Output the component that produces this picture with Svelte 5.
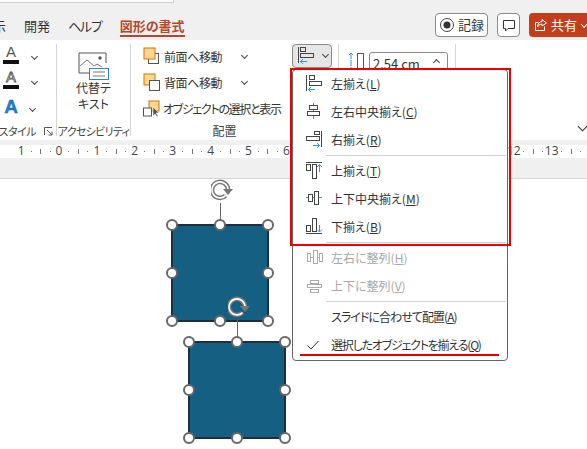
<script>
  const alignItems = [
    { label: '左揃え', key: 'L', icon: 'left' },
    { label: '左右中央揃え', key: 'C', icon: 'center' },
    { label: '右揃え', key: 'R', icon: 'right', sep: true },
    { label: '上揃え', key: 'T', icon: 'top' },
    { label: '上下中央揃え', key: 'M', icon: 'middle' },
    { label: '下揃え', key: 'B', icon: 'bottom', sep: true },
    { label: '左右に整列', key: 'H', icon: 'disth', off: true },
    { label: '上下に整列', key: 'V', icon: 'distv', off: true, sep: true },
    { label: 'スライドに合わせて配置', key: 'A', tight: true },
    { label: '選択したオブジェクトを揃える', key: 'Q', checked: true, tighter: true }
  ];

  const rulerZero = 59;
  const rulerStep = 37.9;
  const rulerNums = [];
  const rulerTicks = [];
  for (let i = -1; i <= 14; i++) {
    const x = rulerZero + i * rulerStep;
    if (i !== 14) rulerNums.push({ x, n: Math.abs(i) });
    rulerTicks.push({ x: x + rulerStep / 4, tall: false });
    rulerTicks.push({ x: x + rulerStep / 2, tall: true });
    rulerTicks.push({ x: x + (rulerStep * 3) / 4, tall: false });
  }

  const handles = [
    [0, 0], [48, 0], [96, 0],
    [0, 48], [96, 48],
    [0, 96], [48, 96], [96, 96]
  ];
  const shapes = [
    { x: 172, y: 225 },
    { x: 189, y: 342 }
  ];
</script>

<div class="app">
  <div class="tabbar">
    <div class="search-edge"></div>
    <div class="tabs">
      <span class="tab clipped">示</span>
      <span class="tab">開発</span>
      <span class="tab help">ヘルプ</span>
      <span class="tab active">図形の書式</span>
    </div>
    <div class="actions">
      <button class="btn record">
        <svg width="16" height="16" viewBox="0 0 16 16"><circle cx="8" cy="8" r="6.5" fill="none" stroke="#444" /><circle cx="8" cy="8" r="3.5" fill="#333" /></svg>
        記録
      </button>
      <button class="btn comment">
        <svg width="16" height="16" viewBox="0 0 16 16" fill="none" stroke="#333"><path d="M2.5 3.5h11v8H7l-2.5 2.5v-2.5h-2z" /></svg>
      </button>
      <button class="btn share">
        <svg width="16" height="16" viewBox="0 0 16 16" fill="none" stroke="#fff"><path d="M9 2.5l4.5 3.5L9 9V7.2C6.5 7.2 5.2 8.3 4.6 10 4.6 7 6 4.8 9 4.6zM11.5 9.5v4h-9v-8h3" /></svg>
        共有
        <span class="share-caret"></span>
      </button>
    </div>
  </div>

  <div class="ribbon">
    <div class="group styles">
      <div class="text-tools">
        <div class="tool-row">
          <span class="a-icon fill">A</span><span class="caret"></span>
        </div>
        <div class="tool-row">
          <span class="a-icon outline">A</span><span class="caret"></span>
        </div>
        <div class="tool-row blue-row">
          <span class="a-blue">A</span><span class="caret"></span>
        </div>
      </div>
      <div class="group-label left-cut">
        <span>ンスタイル</span>
        <svg width="9" height="9" viewBox="0 0 9 9" fill="none" stroke="#555"><path d="M.5 8V.5H8M3 3l5 5M8 4.5V8H4.5" /></svg>
      </div>
    </div>

    <div class="group alt">
      <div class="alt-body">
        <svg width="32" height="28" viewBox="0 0 32 28">
          <path d="M12 21H1V1h27v10" fill="none" stroke="#555" />
          <path d="M2 14l7-6 7 6 3-2 5 3" fill="none" stroke="#777" />
          <circle cx="22" cy="6" r="1.7" fill="#555" />
          <rect x="11.5" y="16.5" width="19" height="11" fill="#fff" stroke="#2b88c8" />
          <path d="M15 20h12M15 24h12" stroke="#777" />
        </svg>
        <span class="alt-text">代替テ<br />キスト</span>
      </div>
      <div class="group-label access">アクセシビリティ</div>
    </div>

    <div class="group arrange">
      <div class="arrange-body">
        <div class="arrange-cmds">
          <div class="cmd">
            <svg width="18" height="20" viewBox="0 0 18 20">
              <rect x="5.5" y="6.5" width="10" height="10" fill="#fff" stroke="#555" />
              <rect x="1" y="1" width="11" height="11" fill="#fad98e" stroke="#d9700f" />
            </svg>
            <span class="cmd-text">前面へ移動</span><span class="caret"></span>
          </div>
          <div class="cmd">
            <svg width="18" height="20" viewBox="0 0 18 20">
              <rect x="1" y="1" width="11" height="11" fill="#fad98e" stroke="#d9700f" />
              <rect x="6.5" y="7.5" width="10" height="10" fill="#fff" stroke="#555" />
            </svg>
            <span class="cmd-text">背面へ移動</span><span class="caret"></span>
          </div>
          <div class="cmd">
            <svg width="18" height="18" viewBox="0 0 18 18">
              <rect x="6" y="1" width="10" height="10" fill="#fad98e" stroke="#d9700f" />
              <rect x="0.5" y="8" width="8" height="8" fill="#fff" stroke="#555" />
              <path d="M10 7v9l2-2 2 3 1-1-2-3h3z" fill="#555" stroke="#fff" stroke-width=".5" />
            </svg>
            <span class="cmd-text last">オブジェクトの選択と表示</span>
          </div>
        </div>
        <div class="align-btn">
          <svg width="18" height="20" viewBox="0 0 18 20" fill="none">
            <path d="M1.5 1v16" stroke="#444" />
            <rect x="3.5" y="1.5" width="5" height="4" stroke="#444" />
            <rect x="3.5" y="7.5" width="13" height="4" stroke="#444" />
            <path d="M10 15.5H3.5M6 13l-2.5 2.5L6 18" stroke="#2b9ae0" />
          </svg>
          <span class="caret"></span>
        </div>
      </div>
      <div class="group-label arrange-label">配置</div>
    </div>

    <div class="group size">
      <div class="size-row">
        <svg width="18" height="20" viewBox="0 0 18 20" fill="none">
          <path d="M4 1v18" stroke="#2b9ae0" stroke-dasharray="6 1" />
          <path d="M2 3l2-2 2 2" stroke="#2b9ae0" />
          <rect x="10.5" y="1.5" width="6" height="17" stroke="#555" />
        </svg>
        <div class="size-input">2.54 cm<span class="spin"></span></div>
      </div>
    </div>
    <span class="collapse"></span>
  </div>

  <div class="ruler-band">
    <div class="ruler">
      {#each rulerTicks as t}
        <i class="tick" class:tall={t.tall} style="left:{t.x}px"></i>
      {/each}
      {#each rulerNums as r}
        <span class="num" style="left:{r.x}px">{r.n}</span>
      {/each}
    </div>
  </div>

  <div class="canvas">
    {#each shapes as s}
      <div class="shape" style="left:{s.x - 1}px;top:{s.y - 180}px">
        <span class="stem"></span>
        <svg class="rotate" width="26" height="24" viewBox="0 0 26 24" fill="none">
          <path d="M14.6 17.6A8 8 0 1 1 17 12" stroke="#777" stroke-width="4.6" />
          <path d="M14.6 17.6A8 8 0 1 1 17 12" stroke="#fff" stroke-width="1.6" />
          <path d="M12 11h10l-5 6z" fill="#777" />
        </svg>
        {#each handles as h}
          <span class="handle" style="left:{h[0]}px;top:{h[1]}px"></span>
        {/each}
      </div>
    {/each}
  </div>

  <div class="menu">
    {#each alignItems as item}
      <div class="menu-item" class:off={item.off}>
        <span class="menu-icon">
          {#if item.checked}
            <svg width="20" height="12" viewBox="0 0 20 12" fill="none" stroke="#333"><path d="M3.5 6.5l3.5 3.5 7.5-8" /></svg>
          {:else if item.icon === 'left'}
            <svg width="20" height="22" viewBox="0 0 20 22" fill="none">
              <path d="M2.5 2v16" stroke="#444" /><rect x="5.5" y="2.5" width="5" height="4" stroke="#444" /><rect x="5.5" y="8.5" width="12" height="4" stroke="#444" />
              <path d="M11 16.5H4.5M7 14l-2.5 2.5L7 19" stroke="#2b9ae0" />
            </svg>
          {:else if item.icon === 'center'}
            <svg width="20" height="22" viewBox="0 0 20 22" fill="none">
              <path d="M9.5 2v16" stroke="#2b9ae0" /><rect x="5.5" y="4.5" width="8" height="4" fill="#fff" stroke="#444" /><rect x="3.5" y="10.5" width="12" height="4" fill="#fff" stroke="#444" />
            </svg>
          {:else if item.icon === 'right'}
            <svg width="20" height="22" viewBox="0 0 20 22" fill="none">
              <path d="M17.5 2v16" stroke="#444" /><rect x="10.5" y="2.5" width="5" height="3" stroke="#444" /><rect x="2.5" y="7.5" width="13" height="4" stroke="#444" />
              <path d="M9 16.5h6.5M13 14l2.5 2.5L13 19" stroke="#2b9ae0" />
            </svg>
          {:else if item.icon === 'top'}
            <svg width="20" height="22" viewBox="0 0 20 22" fill="none">
              <path d="M2 2.5h16" stroke="#444" /><rect x="2.5" y="4.5" width="4" height="6" stroke="#444" /><rect x="8.5" y="4.5" width="4" height="14" stroke="#444" />
              <path d="M15.5 12V4.5M13 7l2.5-2.5L18 7" stroke="#2b9ae0" />
            </svg>
          {:else if item.icon === 'middle'}
            <svg width="20" height="22" viewBox="0 0 20 22" fill="none">
              <path d="M2 9.5h16" stroke="#2b9ae0" /><rect x="4.5" y="6.5" width="4" height="7" fill="#fff" stroke="#444" /><rect x="10.5" y="3.5" width="4" height="13" fill="#fff" stroke="#444" />
            </svg>
          {:else if item.icon === 'bottom'}
            <svg width="20" height="22" viewBox="0 0 20 22" fill="none">
              <path d="M2 17.5h16" stroke="#444" /><rect x="2.5" y="9.5" width="4" height="6" stroke="#444" /><rect x="8.5" y="2.5" width="4" height="13" stroke="#444" />
              <path d="M15.5 9v7M13 13.5l2.5 2.5 2.5-2.5" stroke="#2b9ae0" />
            </svg>
          {:else if item.icon === 'disth'}
            <svg width="20" height="22" viewBox="0 0 20 22" fill="none" stroke="#aaa">
              <rect x="3.5" y="6.5" width="3" height="8" /><path d="M7 10.5h2" /><rect x="9.5" y="3.5" width="4" height="13" /><path d="M14 10.5h1" /><rect x="15.5" y="6.5" width="3" height="8" />
            </svg>
          {:else if item.icon === 'distv'}
            <svg width="20" height="22" viewBox="0 0 20 22" fill="none" stroke="#aaa">
              <rect x="6.5" y="5.5" width="8" height="3" /><rect x="3.5" y="9.5" width="14" height="3" /><rect x="6.5" y="14.5" width="8" height="3" />
            </svg>
          {/if}
        </span>
        <span class="menu-label" class:tight={item.tight} class:tighter={item.tighter}>{item.label}(<u>{item.key}</u>)</span>
      </div>
      {#if item.sep}
        <div class="menu-sep"></div>
      {/if}
    {/each}
  </div>

  <!-- red markup drawn over the screenshot -->
  <div class="mark-box"></div>
  <div class="mark-line"></div>
</div>

<style>
  :global(body) {
    margin: 0;
  }

  .app {
    position: relative;
    width: 587px;
    height: 449px;
    overflow: hidden;
    background: #fff;
    color: #333;
    font-family: "Noto Sans CJK JP", "Noto Sans", sans-serif;
    font-size: 12px;
    font-feature-settings: "palt";
    line-height: 16px;
  }

  .tabbar {
    position: relative;
    height: 40px;
    background: #f0f0f0;
    display: flex;
    justify-content: space-between;
  }

  .search-edge {
    position: absolute;
    left: 0;
    top: 0;
    width: 173px;
    height: 2px;
    background: #fbfbfb;
    border-bottom: 1px solid #d0d0d0;
    border-right: 1px solid #d0d0d0;
  }

  .tabs {
    display: flex;
    gap: 18px;
    padding-top: 17px;
    margin-left: -7px;
  }

  .tab {
    font-size: 13px;
    line-height: 18px;
    height: 18px;
    white-space: nowrap;
  }

  .tab.clipped {
    width: 13px;
  }

  .tab.help {
    letter-spacing: -1.2px;
  }

  .tab.active {
    color: #b7472a;
    font-weight: 700;
    border-bottom: 2px solid #b7472a;
  }

  .actions {
    display: flex;
    gap: 9px;
    padding-top: 13px;
    height: 24px;
  }

  .btn {
    height: 24px;
    box-sizing: border-box;
    border: 1px solid #8a8a8a;
    border-radius: 4px;
    background: #fff;
    padding: 0;
    display: flex;
    align-items: center;
    justify-content: center;
    gap: 3px;
    font: inherit;
    font-size: 13px;
    font-feature-settings: "palt";
    color: #333;
    white-space: nowrap;
  }

  .record {
    width: 53px;
  }

  .comment {
    width: 23px;
  }

  .share {
    width: 58px;
    border: none;
    background: #c43e1c;
    color: #fff;
    border-radius: 4px 0 0 4px;
    justify-content: flex-start;
    padding-left: 4px;
    gap: 2px;
  }

  .share svg {
    flex-shrink: 0;
  }

  .share-caret {
    width: 5px;
    height: 5px;
    border-right: 1px solid #fff;
    border-bottom: 1px solid #fff;
    transform: rotate(45deg);
    margin: -3px 0 0 3px;
  }

  .ribbon {
    position: relative;
    height: 100px;
    background: #fff;
    display: flex;
  }

  .group {
    box-sizing: border-box;
    height: 92px;
    margin-top: 4px;
    border-right: 1px solid #d4d4d4;
    display: flex;
    flex-direction: column;
    justify-content: space-between;
  }

  .group-label {
    font-size: 11px;
    line-height: 14px;
    margin-bottom: -2px;
    color: #444;
    text-align: center;
    white-space: nowrap;
  }

  .styles {
    width: 57px;
    overflow: hidden;
  }

  .text-tools {
    display: flex;
    flex-direction: column;
    gap: 5px;
    padding-left: 3px;
  }

  .tool-row {
    height: 20px;
    display: flex;
    align-items: center;
    gap: 11px;
  }

  .tool-row .caret {
    margin-top: 4px;
  }

  .a-icon {
    width: 16px;
    height: 20px;
    box-sizing: border-box;
    border-bottom: 4px solid #111;
    font-family: "Liberation Sans", sans-serif;
    font-size: 15px;
    line-height: 16px;
    text-align: center;
    color: #555;
  }

  .a-icon.outline {
    color: #fff;
    -webkit-text-stroke: 0.8px #555;
  }

  .blue-row {
    gap: 9px;
  }

  .tool-row.blue-row .caret {
    margin-top: 8px;
  }

  .a-blue {
    width: 16px;
    margin-top: 6px;
    font-family: "Liberation Sans", sans-serif;
    font-weight: 700;
    font-size: 19px;
    text-align: center;
    color: #1e7fd0;
    -webkit-text-stroke: 0.4px #0e5fa8;
  }

  .caret {
    width: 4px;
    height: 4px;
    border-right: 1px solid #444;
    border-bottom: 1px solid #444;
    transform: rotate(45deg);
    margin-top: -3px;
    margin-left: 2px;
    flex-shrink: 0;
  }

  .left-cut {
    display: flex;
    justify-content: flex-end;
    align-items: center;
    gap: 8px;
    padding-right: 3px;
    letter-spacing: -0.5px;
  }

  .left-cut svg {
    flex-shrink: 0;
  }

  .alt {
    width: 74px;
  }

  .alt-body {
    display: flex;
    flex-direction: column;
    align-items: center;
    padding-top: 8px;
  }

  .alt-text {
    text-align: center;
    line-height: 16px;
  }

  .access {
    letter-spacing: -0.7px;
  }

  .arrange {
    width: 208px;
  }

  .arrange-body {
    display: flex;
    justify-content: space-between;
    padding-right: 6px;
  }

  .arrange-cmds {
    display: flex;
    flex-direction: column;
    gap: 5px;
    padding: 2px 0 0 12px;
  }

  .cmd {
    height: 21px;
    display: flex;
    align-items: center;
    white-space: nowrap;
  }

  .cmd-text {
    width: 76px;
    margin-left: 3px;
    letter-spacing: -0.4px;
  }

  .cmd-text.last {
    width: auto;
    margin-left: 2px;
    letter-spacing: -1.3px;
  }

  .align-btn {
    box-sizing: border-box;
    width: 40px;
    height: 24px;
    border: 1px solid #8a8a8a;
    border-radius: 4px;
    background: #e6e6e6;
    display: flex;
    align-items: center;
    gap: 6px;
    padding-left: 4px;
  }

  .arrange-label {
    width: 187px;
    font-size: 12px;
  }

  .size {
    width: 117px;
    padding: 8px 0 0 8px;
    justify-content: flex-start;
  }

  .size-row {
    display: flex;
    align-items: flex-start;
    gap: 4px;
  }

  .size-input {
    box-sizing: border-box;
    width: 79px;
    height: 24px;
    border: 1px solid #8a8a8a;
    border-radius: 3px;
    padding-left: 3px;
    font-size: 13px;
    line-height: 22px;
    position: relative;
  }

  .spin {
    position: absolute;
    right: 8px;
    top: 7px;
    width: 4px;
    height: 4px;
    border-left: 1px solid #444;
    border-top: 1px solid #444;
    transform: rotate(45deg);
  }

  .collapse {
    position: absolute;
    left: 579px;
    top: 83px;
    width: 6px;
    height: 6px;
    border-right: 1px solid #333;
    border-bottom: 1px solid #333;
    transform: rotate(45deg);
  }

  .ruler-band {
    height: 39px;
    box-sizing: border-box;
    padding-top: 5px;
    background: #f0f0f0;
    border-bottom: 1px solid #d6d6d6;
  }

  .ruler {
    position: relative;
    height: 13px;
    background: #fff;
  }

  .tick {
    position: absolute;
    top: 6px;
    width: 1px;
    height: 1px;
    background: #777;
  }

  .tick.tall {
    top: 4px;
    height: 5px;
  }

  .num {
    position: absolute;
    top: -2px;
    transform: translateX(-50%);
    font-family: "Open Sans", sans-serif;
    font-size: 12px;
    color: #444;
  }

  .canvas {
    position: relative;
    height: 270px;
    background: #fff;
  }

  .shape {
    position: absolute;
    box-sizing: border-box;
    width: 98px;
    height: 98px;
    background: #156082;
    border: 2px solid #1f2f3d;
  }

  .stem {
    position: absolute;
    left: 47px;
    top: -23px;
    width: 1px;
    height: 23px;
    background: #666;
  }

  .rotate {
    position: absolute;
    left: 38px;
    top: -48px;
  }

  .handle {
    position: absolute;
    box-sizing: border-box;
    width: 12px;
    height: 12px;
    margin: -7px 0 0 -7px;
    border: 2px solid #666;
    border-radius: 50%;
    background: #fff;
  }

  .menu {
    position: absolute;
    left: 292px;
    top: 69px;
    box-sizing: border-box;
    width: 216px;
    height: 292px;
    background: #fff;
    border: 1px solid #666;
    border-radius: 4px;
  }

  .menu-item {
    height: 28px;
    display: flex;
    align-items: center;
    white-space: nowrap;
  }

  .menu-item.off {
    color: #a8a8a8;
  }

  .menu-icon {
    box-sizing: border-box;
    width: 38px;
    display: flex;
    padding-left: 11px;
  }

  .menu-label.tight {
    letter-spacing: -0.95px;
  }

  .menu-label.tighter {
    letter-spacing: -1.2px;
  }

  .menu-sep {
    height: 1px;
    background: #d0d0d0;
    margin: 1px 1px 1px 33px;
  }

  .mark-box {
    position: absolute;
    left: 290px;
    top: 68px;
    box-sizing: border-box;
    width: 221px;
    height: 178px;
    border: 2px solid #ee0000;
  }

  .mark-line {
    position: absolute;
    left: 300px;
    top: 354px;
    width: 199px;
    height: 2px;
    background: #e00000;
  }
</style>
